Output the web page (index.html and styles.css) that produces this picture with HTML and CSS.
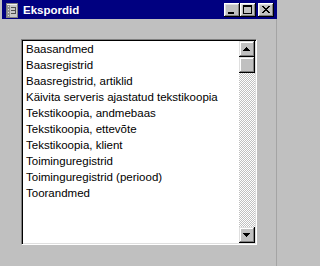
FILE: index.html
```html
<!DOCTYPE html>
<html lang="et">
<head>
<meta charset="utf-8">
<title>Ekspordid</title>
<link rel="stylesheet" href="styles.css">
</head>
<body>
<div class="window">
  <div class="titlebar">
    <svg class="app-icon" width="12" height="15" viewBox="0 0 12 15" shape-rendering="crispEdges">
      <rect x="0.5" y="0.5" width="11" height="14" fill="#c8c8c8" stroke="#808080"/>
      <rect x="1" y="1" width="10" height="1" fill="#f0f0f0"/>
      <rect x="1" y="2" width="3" height="12" fill="#909090"/>
      <rect x="2" y="3" width="1" height="1" fill="#e0e0e0"/>
      <rect x="2" y="6" width="1" height="1" fill="#e0e0e0"/>
      <rect x="2" y="9" width="1" height="1" fill="#e0e0e0"/>
      <rect x="2" y="12" width="1" height="1" fill="#e0e0e0"/>
      <rect x="5" y="4" width="5" height="1" fill="#505050"/>
      <rect x="5" y="7" width="5" height="1" fill="#505050"/>
      <rect x="5" y="10" width="5" height="1" fill="#505050"/>
      <rect x="9" y="4" width="1" height="7" fill="#505050"/>
    </svg>
    <span class="title">Ekspordid</span>
    <div class="controls">
      <div class="ctl">
        <svg width="16" height="14" viewBox="0 0 16 14" shape-rendering="crispEdges"><rect x="4" y="9" width="6" height="2" fill="#000"/></svg>
      </div>
      <div class="ctl">
        <svg width="16" height="14" viewBox="0 0 16 14" shape-rendering="crispEdges"><rect x="3.5" y="2.5" width="8" height="8" fill="none" stroke="#000"/><rect x="3" y="3" width="9" height="1" fill="#000"/></svg>
      </div>
      <div class="ctl ctl-close">
        <svg width="16" height="14" viewBox="0 0 16 14" shape-rendering="crispEdges">
          <path d="M4 3h2v1h1v1h2v-1h1v-1h2v1h-1v1h-1v1h-1v1h1v1h1v1h1v1h-2v-1h-1v-1h-2v1h-1v1h-2v-1h1v-1h1v-1h1v-1h-1v-1h-1v-1h-1z" fill="#000"/>
        </svg>
      </div>
    </div>
  </div>
  <div class="client">
    <div class="listbox">
      <ul class="items">
        <li>Baasandmed</li>
        <li>Baasregistrid</li>
        <li>Baasregistrid, artiklid</li>
        <li>Käivita serveris ajastatud tekstikoopia</li>
        <li>Tekstikoopia, andmebaas</li>
        <li>Tekstikoopia, ettevõte</li>
        <li>Tekstikoopia, klient</li>
        <li>Toiminguregistrid</li>
        <li>Toiminguregistrid (periood)</li>
        <li>Toorandmed</li>
      </ul>
      <div class="scrollbar">
        <div class="sb-btn">
          <svg width="16" height="16" viewBox="0 0 16 16" shape-rendering="crispEdges"><path d="M7 6h1v1h1v1h1v1h1v1h-7v-1h1v-1h1v-1h1z" fill="#000"/></svg>
        </div>
        <div class="sb-track"><div class="sb-thumb"></div></div>
        <div class="sb-btn">
          <svg width="16" height="16" viewBox="0 0 16 16" shape-rendering="crispEdges"><path d="M4 6h7v1h-1v1h-1v1h-1v1h-1v-1h-1v-1h-1v-1h-1z" fill="#000"/></svg>
        </div>
      </div>
    </div>
  </div>
</div>
</body>
</html>
```

FILE: styles.css
```css
html, body {
  margin: 0;
  padding: 0;
  background: #c0c0c0;
  width: 280px;
  height: 266px;
  overflow: hidden;
}

.window {
  margin-left: 2px;
  width: 275px;
  height: 266px;
  display: flex;
  flex-direction: column;
  font-family: "Liberation Sans", Arial, sans-serif;
}

.titlebar {
  height: 19px;
  background: #000080;
  display: flex;
  align-items: center;
  padding-left: 4px;
  padding-right: 3px;
  box-sizing: border-box;
}

.app-icon {
  display: block;
  margin-top: 1px;
}

.title {
  color: #ffffff;
  font-weight: bold;
  font-size: 11.5px;
  margin-left: 5px;
}

.controls {
  margin-left: auto;
  display: flex;
}

.ctl {
  width: 16px;
  height: 14px;
  background: #c0c0c0;
  box-shadow: inset -1px -1px #000, inset 1px 1px #fff, inset -2px -2px #808080, inset 2px 2px #dfdfdf;
}

.ctl svg {
  display: block;
}

.ctl-close {
  margin-left: 2px;
}

.client {
  flex: 1;
  padding: 20px 0 0 19px;
  border-right: 1px solid #a4a4a4;
}

.listbox {
  width: 236px;
  height: 206px;
  box-sizing: border-box;
  background: #ffffff;
  border-top: 1px solid #808080;
  border-left: 1px solid #808080;
  border-right: 1px solid #ffffff;
  border-bottom: 1px solid #ffffff;
  box-shadow: inset 1px 1px #000, inset -1px -1px #dfdfdf;
  padding: 1px;
  display: flex;
}

.items {
  list-style: none;
  margin: 0;
  padding: 0 0 0 3px;
  flex: 1;
  font-size: 11.5px;
  line-height: 16px;
  color: #000;
  white-space: nowrap;
  overflow: hidden;
}

.scrollbar {
  width: 16px;
  display: flex;
  flex-direction: column;
}

.sb-btn {
  width: 16px;
  height: 16px;
  background: #c0c0c0;
  box-shadow: inset -1px -1px #000, inset 1px 1px #dfdfdf, inset -2px -2px #808080, inset 2px 2px #fff;
}

.sb-btn svg {
  display: block;
}

.sb-track {
  flex: 1;
  background: repeating-conic-gradient(#c0c0c0 0 25%, #ffffff 0 50%) 0 0 / 2px 2px;
}

.sb-thumb {
  width: 16px;
  height: 16px;
  background: #c0c0c0;
  box-shadow: inset -1px -1px #000, inset 1px 1px #dfdfdf, inset -2px -2px #808080, inset 2px 2px #fff;
}
```
